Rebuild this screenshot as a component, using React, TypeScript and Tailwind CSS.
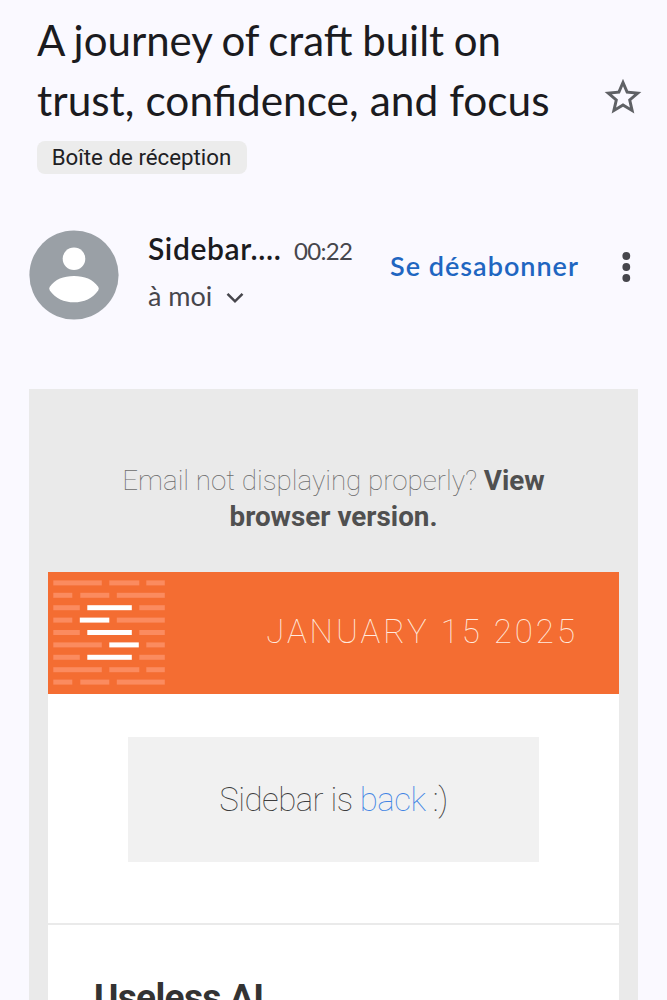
import { clsx } from 'clsx';

const SANS = "font-['Lato',sans-serif]";

// [x, width, highlighted] for each dash, on a 112 unit wide grid
type Dash = [number, number, boolean?];

const LONG_FIRST: Dash[] = [[0, 48.5], [56, 30], [93, 18.5]];
const LONG_LAST: Dash[] = [[0, 19], [27, 29], [63.5, 48]];
const CENTER: Dash[] = [[0, 26.5], [34, 44.5, true], [86, 25.5]];

const LOGO_ROWS: Dash[][] = [
  LONG_FIRST,
  LONG_LAST,
  CENTER,
  [[0, 19], [26.5, 29.5, true], [63.5, 48]],
  CENTER,
  [[0, 48.5], [56, 29.5, true], [93, 18.5]],
  CENTER,
  LONG_FIRST,
  LONG_LAST,
];

function SidebarLogo() {
  return (
    <svg width="112" height="105" viewBox="0 0 112 105" className="shrink-0">
      {LOGO_ROWS.map((row, i) =>
        row.map(([x, width, active]) => (
          <rect
            key={`${i}-${x}`}
            x={x + 0.3}
            y={0.4 + i * 12.4}
            width={width}
            height={5}
            className={clsx(active ? 'fill-white' : 'fill-[#fb8b5f]')}
          />
        ))
      )}
    </svg>
  );
}

function Avatar() {
  return (
    <svg width="90" height="90" viewBox="0 0 90 90" className="shrink-0">
      <circle cx="45" cy="45" r="44.6" fill="#9aa0a6" />
      <circle cx="45" cy="28.7" r="11.3" fill="#fff" />
      <path d="M20.800 56.800C26 49.300 34.500 46 45 46s19 3.300 24.200 10.800q1.200 1.800 0 3.600C63.500 68.500 55 72.200 45 72.200S26.500 68.500 20.800 60.400q-1.200-1.800 0-3.600z" fill="#fff" />
    </svg>
  );
}

function StarIcon() {
  return (
    <svg width="44" height="44" viewBox="0 0 24 24" fill="#5f6165" className="shrink-0">
      <path d="M22 9.240l-7.190-.62L12 2 9.190 8.630 2 9.240l5.460 4.730L5.820 21 12 17.270 18.180 21l-1.630-7.030L22 9.240zM12 15.400l-3.760 2.270 1-4.280-3.320-2.880 4.380-.38L12 6.100l1.710 4.040 4.380.38-3.320 2.880 1 4.280L12 15.400z" />
    </svg>
  );
}

function MessageHeader() {
  return (
    <header className="h-[389px] pl-[29px]">
      <div className="flex">
        <h1 className={clsx(SANS, 'ml-2 h-[131px] w-[568px] pt-[11px] text-[42px] leading-[59px] whitespace-nowrap text-[#1b1b20]')}>
          <span className="block [word-spacing:-1.200px]">A journey of craft built on</span>
          <span className="block text-[42.400px] [word-spacing:0.200px]">trust, confidence, and focus</span>
        </h1>
        <button type="button" className="-ml-[4px] mt-[75px] h-11">
          <StarIcon />
        </button>
      </div>
      <div className="mt-[10px] ml-2 flex h-[33px] w-[210px] items-center justify-center rounded-[8px] bg-[#ececec] pr-[1px] font-[Roboto,sans-serif] text-[22.300px] text-[#202023]">
        Boîte de réception
      </div>
      <div className="mt-[56px] flex">
        <Avatar />
        <div className={clsx(SANS, 'ml-[29px] w-[242px]')}>
          <div className="flex h-9 items-baseline">
            <span className="w-[146px] text-[30px] leading-9 font-semibold tracking-[0.600px] text-[#1b1b20]">Sidebar....</span>
            <span className="text-[24px] tracking-[-0.700px] text-[#46464c]">00:22</span>
          </div>
          <div className="mt-3 flex h-9 items-center">
            <span className="w-[78px] text-[27px] text-[#46464c]">à moi</span>
            <svg width="18" height="12" viewBox="0 0 18 12" fill="none" stroke="#46464c" strokeWidth="2.5" className="mt-1">
              <path d="M1.500 1.800L9 9.300l7.500-7.500" />
            </svg>
          </div>
        </div>
        <button type="button" className={clsx(SANS, 'mt-[18px] h-9 w-[231px] text-left text-[27px] leading-9 font-semibold tracking-[1px] text-[#1f66c1]')}>
          Se désabonner
        </button>
        <svg width="10" height="32" viewBox="0 0 10 32" fill="#46464c" className="mt-[21px]">
          <circle cx="5.300" cy="5" r="3.900" />
          <circle cx="5.300" cy="16" r="3.900" />
          <circle cx="5.300" cy="27" r="3.900" />
        </svg>
      </div>
    </header>
  );
}

export default function App() {
  return (
    <main className="h-[1000px] w-[667px] overflow-hidden bg-[#faf9ff]">
      <MessageHeader />

      <section className="ml-[29px] h-[611px] w-[609px] bg-[#eaeaea] px-[19px] pt-[74px] font-[Roboto,sans-serif]">
        <p className="text-center text-[27.800px] leading-9 font-thin text-[#6c6c6c]">
          Email not displaying properly? <a className="font-bold text-[#505050]">View<br />browser version.</a>
        </p>

        <div className="mt-[36.500px] flex h-[122px] items-center justify-between bg-[#f46d32] pr-[41px] pb-px pl-[5px]">
          <SidebarLogo />
          <span className="text-[33px] leading-[48px] font-thin tracking-[3px] text-[#ffeadf]">JANUARY 15 2025</span>
        </div>

        <div className="h-[307px] bg-white">
          <div className="flex h-[231.500px] items-center justify-center border-b-2 border-[#eaeaea]">
            <p className="mb-[18px] flex h-[125px] w-[411px] items-center justify-center bg-[#f1f1f1] text-[33px] font-thin tracking-[-0.550px] text-[#3c3c3c]">
              <span>
                Sidebar is <a className="text-[#4285e4]">back</a> :)
              </span>
            </p>
          </div>
          <h2 className="mt-[51px] ml-[46px] text-[37px] leading-[44px] font-bold tracking-[-0.650px] text-[#333]">Useless AI</h2>
        </div>
      </section>
    </main>
  );
}
